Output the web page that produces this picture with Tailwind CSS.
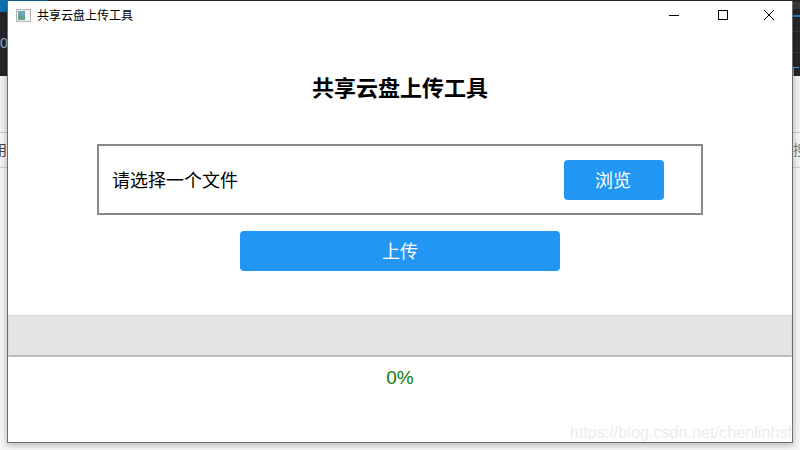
<!DOCTYPE html>
<html lang="zh-CN">
<head>
  <meta charset="UTF-8" />
  <title>共享云盘上传工具</title>
  <script src="https://cdn.jsdelivr.net/npm/@tailwindcss/browser@4"></script>
</head>
<body class="w-[800px] h-[450px] overflow-hidden relative bg-white font-['Liberation_Sans','Noto_Sans_CJK_SC',sans-serif]">
  <!-- desktop behind the window -->
  <div class="absolute inset-0 flex flex-col">
    <div class="h-[76px] bg-[#26262a] relative overflow-hidden">
      <div class="absolute left-0 top-0 w-[48px] h-px bg-[#0e5f96]"></div>
      <div class="absolute left-0 top-0 w-[7px] h-[12px] bg-[#0e72b5]"></div>
      <div class="absolute left-0 top-[35px] text-[14px] leading-4 text-[#8fb4c8]">0</div>
      <div class="absolute right-0 top-[2px] w-[7px] h-[7px] bg-[#3a3a3a]"></div>
      <div class="absolute right-0 top-[15px] w-[7px] h-[2px] bg-[#1f7fc4]"></div>
      <div class="absolute right-0 top-[31px] w-[7px] h-px bg-[#3a3a3e]"></div>
      <div class="absolute right-0 top-[52px] w-[7px] h-px bg-[#3a3a3e]"></div>
      <div class="absolute right-[1px] top-[67px] w-[6px] h-[9px] border-l border-t border-[#5a9fd4]"></div>
    </div>
    <div class="h-[57px] bg-[#f2f2f2] border-b border-[#c8c8c8]"></div>
    <div class="h-[35px] bg-[#f4f4f4] border-b border-[#d0d0d0] relative overflow-hidden">
      <span class="absolute left-[-7px] top-[9px] text-[14px] leading-4 text-[#444444]">用</span>
      <span class="absolute right-[-7px] top-[9px] text-[14px] leading-4 text-[#777777]">搜</span>
    </div>
    <div class="flex-1 bg-[#f6f6f6]"></div>
  </div>

  <!-- window -->
  <div class="relative ml-[7px] mt-px w-[786px] h-[442px] bg-white border border-t-0 border-[#6e6e6e] shadow-[0_2px_7px_rgba(0,0,0,0.28)] flex flex-col">
    <!-- title bar -->
    <div class="h-[29px] flex items-center pl-2 shrink-0">
      <svg width="15" height="13" viewBox="0 0 15 13" class="shrink-0">
        <rect x="0.5" y="0.5" width="14" height="12" fill="#f0f0f0" stroke="#b4b4b4" />
        <rect x="2" y="2" width="7" height="9" fill="#6fa6b2" />
        <rect x="2" y="7" width="7" height="4" fill="#5fa583" />
        <rect x="10" y="2" width="3" height="9" fill="#f8f8f8" />
      </svg>
      <span class="ml-[6px] text-[12px] leading-none text-black">共享云盘上传工具</span>
      <div class="ml-auto flex h-full items-center">
        <svg width="46" height="29" viewBox="0 0 46 29"><path d="M18 14.5h10" stroke="#000" fill="none" /></svg>
        <svg width="46" height="29" viewBox="0 0 46 29" class="ml-[3px]"><rect x="18.5" y="9.5" width="9" height="9" stroke="#000" fill="none" /></svg>
        <svg width="46" height="29" viewBox="0 0 46 29"><path d="M18 9l10 10M28 9l-10 10" stroke="#000" fill="none" /></svg>
      </div>
    </div>

    <h1 class="mt-[43px] text-center text-[22px] leading-[32px] font-bold text-black">共享云盘上传工具</h1>

    <!-- file picker -->
    <div class="mt-[39px] mx-[89px] h-[71px] border-2 border-[#888888] flex items-center justify-between pl-[13px] pr-[37px]">
      <span class="pt-[4px] text-[18px] text-black">请选择一个文件</span>
      <button class="w-[100px] h-[40px] pt-[4px] pr-[2px] bg-[#2196f3] rounded text-white text-[18px]">浏览</button>
    </div>

    <button class="mt-4 mx-auto w-[320px] h-[40px] pt-[2px] bg-[#2196f3] rounded text-white text-[18px]">上传</button>

    <!-- progress bar -->
    <div class="mt-[44px] h-[42px] bg-[#e4e4e4] border border-[#dcdcdc] border-b-2 border-b-[#bcbcbc]"></div>

    <p class="mt-[8px] text-center text-[19px] leading-[26px] text-[#0a7d00]">0%</p>

    <span class="absolute right-0 bottom-0 text-[16.2px] leading-[20px] text-[#ececec] whitespace-nowrap">https://blog.csdn.net/chenlinhsf</span>
  </div>
</body>
</html>
